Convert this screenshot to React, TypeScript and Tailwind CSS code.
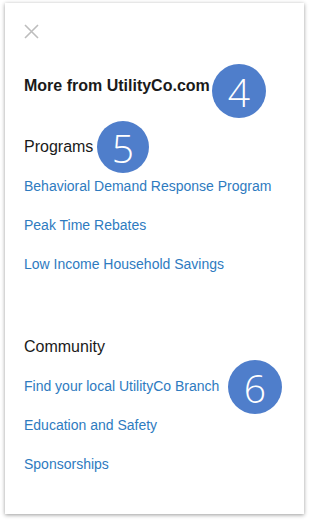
import React from 'react'

const programs = [
  'Behavioral Demand Response Program',
  'Peak Time Rebates',
  'Low Income Household Savings',
]

const community = [
  'Find your local UtilityCo Branch',
  'Education and Safety',
  'Sponsorships',
]

function Badge({ n, className }: { n: number; className: string }) {
  return (
    <div
      className={`absolute flex items-center justify-center rounded-full bg-[#4f7ecb] text-[39px] font-light leading-none text-white ${className}`}
      style={{ fontFamily: '"Open Sans", "Liberation Sans", sans-serif' }}
    >
      {n}
    </div>
  )
}

function Section({ title, links, badge }: { title: React.ReactNode; links: string[]; badge?: React.ReactNode }) {
  return (
    <div className="flex flex-col gap-[19px]">
      <div className="relative h-5 text-[16px] leading-5 text-[#1a1a1a]">{title}</div>
      {links.map((l, i) => (
        <div key={l} className="relative h-5 leading-5">
          <a href="#" className="text-[14px] text-[#2e7bbf]">
            {l}
          </a>
          {i === 0 && badge}
        </div>
      ))}
    </div>
  )
}

export default function App() {
  return (
    <div className="min-h-[525px] bg-white pl-[5px] pt-[3px]" style={{ fontFamily: '"Liberation Sans", Arial, sans-serif' }}>
      <div className="flex h-[511px] w-[299px] flex-col bg-white pl-[19px] pt-[21px] shadow-[0_1px_4px_rgba(0,0,0,0.4)]">
        {/* close */}
        <svg width="15" height="15" viewBox="0 0 15 15" className="block">
          <path d="M1 1 L14 14 M14 1 L1 14" stroke="#bdbdbd" strokeWidth="1.6" fill="none" />
        </svg>

        <div className="relative mt-[37px] h-5 text-[16px] font-bold leading-5 text-[#1a1a1a]">
          More from UtilityCo.com
          <Badge n={4} className="left-[188px] top-[-12px] h-[54px] w-[54px]" />
        </div>

        <div className="mt-[41px]">
          <Section
            title={
              <>
                Programs
                <Badge n={5} className="left-[73px] top-[-16px] h-[52px] w-[52px]" />
              </>
            }
            links={programs}
          />
        </div>

        <div className="mt-[63px]">
          <Section
            title="Community"
            links={community}
            badge={<Badge n={6} className="left-[204px] top-[-16px] h-[54px] w-[54px]" />}
          />
        </div>
      </div>
    </div>
  )
}
